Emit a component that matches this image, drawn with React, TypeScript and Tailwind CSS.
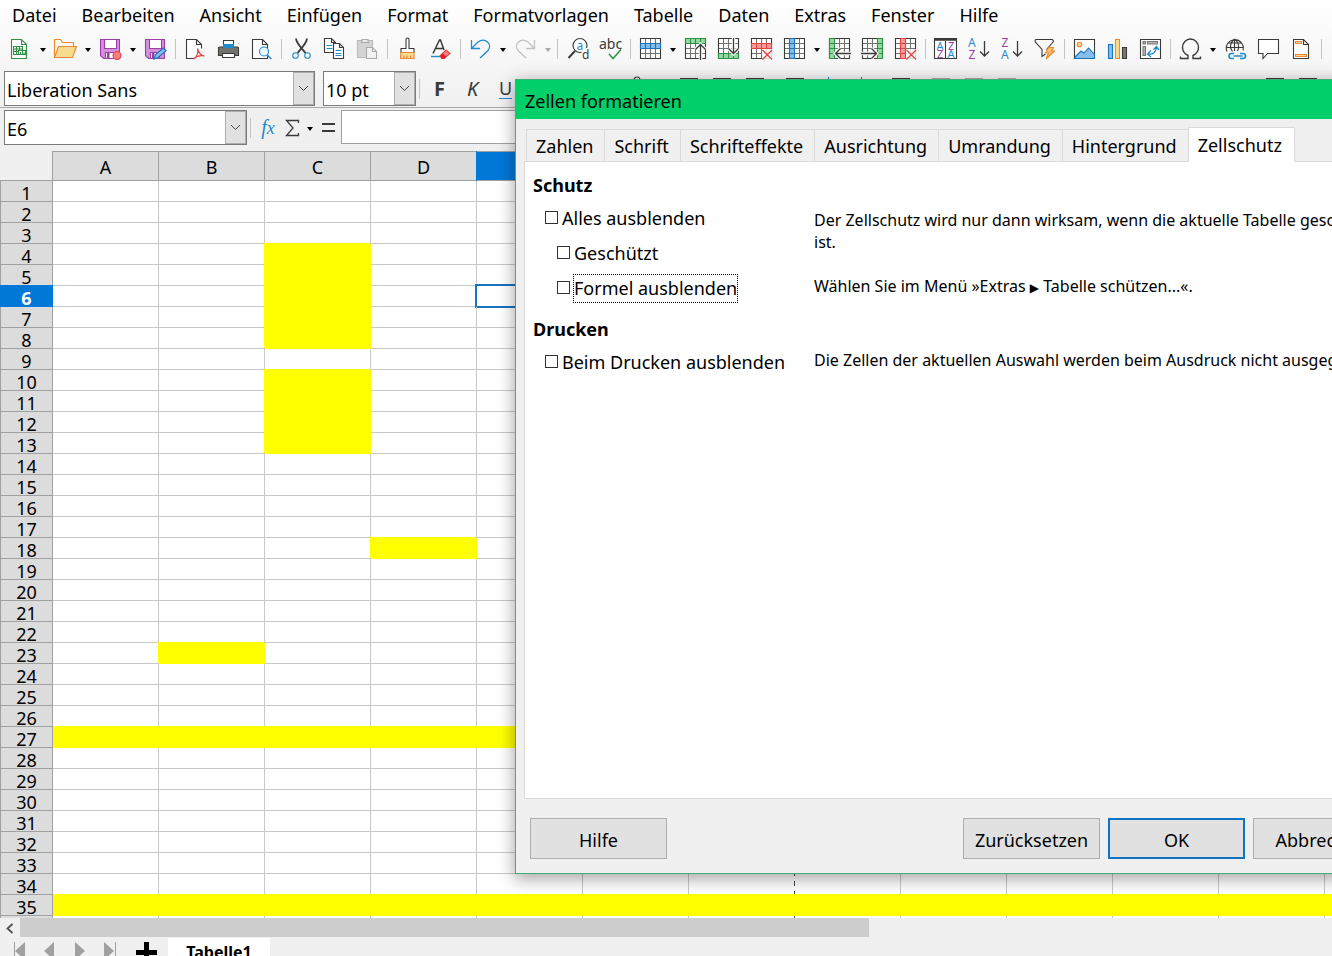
import { useState } from "react";
import type { ReactNode } from "react";

const DARK = "#3a3a38";
const BLUE = "#1e8bcd";
const GREEN = "#309048";
const ORANGE = "#ed8733";
const RED = "#e0433f";
const PURPLE = "#9b3fa5";

const menuItems = ["Datei", "Bearbeiten", "Ansicht", "Einfügen", "Format", "Formatvorlagen", "Tabelle", "Daten", "Extras", "Fenster", "Hilfe"];
const columns = ["A", "B", "C", "D", "E", "F", "G", "H", "I", "J", "K", "L", "M"];
const rows = Array.from({ length: 36 }, (_, i) => i + 1);
const dialogTabs = ["Zahlen", "Schrift", "Schrifteffekte", "Ausrichtung", "Umrandung", "Hintergrund", "Zellschutz"];

const isYellow = (col: string, row: number) => {
  if (row === 27 || row === 35) return true;
  if (col === "C") return (row >= 4 && row <= 8) || (row >= 10 && row <= 13);
  return (col === "D" && row === 18) || (col === "B" && row === 23);
};

const cellClass = (col: string, row: number) => {
  if (!isYellow(col, row)) return "border-[#c8c8c8]";
  return col === "A"
    ? "border-[#ffff00] bg-[#ffff00] shadow-[0_-1px_0_0_#ffff00]"
    : "border-[#ffff00] bg-[#ffff00] shadow-[-1px_-1px_0_0_#ffff00]";
};

function Icon({ children }: { children: ReactNode }) {
  return (
    <svg width="23" height="23" viewBox="0 0 23 23" fill="none" stroke={DARK} strokeWidth="1.1" className="overflow-visible" aria-hidden="true">
      {children}
    </svg>
  );
}

function Tool({ label, children }: { label: string; children: ReactNode }) {
  return (
    <button type="button" aria-label={label} className="flex h-full w-[33px] shrink-0 items-center justify-center">
      {children}
    </button>
  );
}

function More({ muted = false }: { muted?: boolean }) {
  return (
    <button type="button" aria-label="Mehr" className="flex h-full w-3 shrink-0 items-center justify-center">
      <svg width="8" height="8" viewBox="0 0 8 8" fill={muted ? "#a8a8a8" : "#000"} aria-hidden="true">
        <path d="M1 3h6L4 7z" />
      </svg>
    </button>
  );
}

function Sep() {
  return (
    <span className="flex w-[7px] shrink-0 justify-center">
      <span className="h-5 w-px bg-[#c4c4c4]" />
    </span>
  );
}

function Floppy() {
  return (
    <>
      <path d="M1.500 1.500h19v19h-16l-3-3z" fill="#d391dc" stroke={PURPLE} />
      <path d="M5.500 1.500h12v9h-12z" fill="#fff" stroke={PURPLE} />
      <path d="M6.500 14.500h9v6h-9z" fill="#fff" stroke={PURPLE} />
      <path d="M8 15h2.500v5H8z" fill={PURPLE} stroke="none" />
    </>
  );
}

type GridIconProps = { band?: "row" | "col" | "top" | "bottom" | "left" | "right"; fill: string; line: string; children?: ReactNode };

// 4x4 table with one highlighted strip, shared by the row and column commands
function GridIcon({ band, fill, line, children }: GridIconProps) {
  return (
    <Icon>
      <path d="M1.500.5h20v20h-20z" fill="#fff" />
      <path d="M6.500 1v19M11.500 1v19M16.500 1v19M2 5.500h19M2 10.500h19M2 15.500h19" stroke="#72726f" />
      {band === "row" && <path d="M1.500 5.500h20v5h-20zM6.500 5.500v5M11.500 5.500v5M16.500 5.500v5" fill={fill} stroke={line} />}
      {band === "col" && <path d="M6.500.5h5v20h-5zM6.500 5.500h5M6.500 10.500h5M6.500 15.500h5" fill={fill} stroke={line} />}
      {band === "top" && <path d="M1.500.5h20v5h-20zM6.500.5v5M11.500.5v5M16.500.5v5" fill={fill} stroke={line} />}
      {band === "bottom" && <path d="M1.500 15.500h20v5h-20zM6.500 15.500v5M11.500 15.500v5M16.500 15.500v5" fill={fill} stroke={line} />}
      {band === "left" && <path d="M1.500.5h5v20h-5zM1.500 5.500h5M1.500 10.500h5M1.500 15.500h5" fill={fill} stroke={line} />}
      {band === "right" && <path d="M16.500.5h5v20h-5zM16.500 5.500h5M16.500 10.500h5M16.500 15.500h5" fill={fill} stroke={line} />}
      {children}
    </Icon>
  );
}

function Arrow({ d }: { d: string }) {
  return (
    <>
      <path d={d} stroke="#fff" strokeWidth="3.500" />
      <path d={d} stroke={DARK} strokeWidth="1.300" />
    </>
  );
}

function Cross() {
  return (
    <>
      <path d="M12 11h10.500v10.500H12z" fill="#fff" fillOpacity=".8" stroke="none" />
      <path d="M12.500 12l9.500 9.500M22 12l-9.500 9.500" stroke={RED} strokeWidth="1.300" />
    </>
  );
}

function Letter({ x, y, size = 11, fill, children }: { x: number; y: number; size?: number; fill: string; children: string }) {
  return (
    <text x={x} y={y} fontSize={size} fill={fill} stroke="none" fontFamily="Noto Sans, sans-serif">
      {children}
    </text>
  );
}

function StandardBar() {
  return (
    <div className="flex h-9 items-center pl-1" role="toolbar" aria-label="Standard">
      <Tool label="Neu">
        <Icon>
          <path d="M2.500 1.500h10l5 5v14h-15zM12.500 1.500v5h5" fill="#fff" stroke={GREEN} />
          <path d="M4.500 8.500h9v8h-9zM4.500 11h9M4.500 13.500h9M7.500 8.500v8M10.500 8.500v8" stroke={GREEN} />
          <path d="M9.500 12.500h7v4h-7z" fill="#fff" stroke={GREEN} />
          <path d="M11.500 14v2M13.500 13v3M15 14.500v1.500" stroke={GREEN} />
        </Icon>
      </Tool>
      <More />
      <Tool label="Öffnen">
        <Icon>
          <path d="M.5 19V1.500h6l2 3h11v4" fill="#fff7ea" stroke={ORANGE} />
          <path d="M.5 19.500L4.500 8.500h18l-4 11z" fill="#f8db8f" stroke={ORANGE} />
        </Icon>
      </Tool>
      <More />
      <Tool label="Speichern">
        <Icon>
          <Floppy />
          <circle cx="18" cy="17.500" r="4" fill="#f58080" stroke={RED} />
        </Icon>
      </Tool>
      <More />
      <Tool label="Speichern unter">
        <Icon>
          <Floppy />
          <path d="M10 21l1.500-4.500 8-6.500 2.500 2.800-8 6.700z" fill="#83beec" stroke="#1a6fb5" />
        </Icon>
      </Tool>
      <Sep />
      <Tool label="Als PDF exportieren">
        <Icon>
          <path d="M10 20.500H2.500v-19h10l5 5v4M12.500 1.500v5h5" fill="#fdfdfd" />
          <path d="M13.500 10.500c1 4 3 7 7 7.500-4-1-8 0-11 3 3-1 5-6 4-10.500z" stroke={RED} />
        </Icon>
      </Tool>
      <Tool label="Drucken">
        <Icon>
          <path d="M6.500 8V2.500h10V8" fill="#fff" />
          <path d="M2.500 9h18a1 1 0 011 1v7.500h-20V10a1 1 0 011-1z" fill="#72726f" stroke={DARK} />
          <path d="M6 6h11v4H6z" fill={BLUE} stroke="none" />
          <path d="M5.500 15.500h12v4h-12z" fill="#fff" />
        </Icon>
      </Tool>
      <Tool label="Druckvorschau">
        <Icon>
          <path d="M2.500 1.500h10l5 5v14h-15zM12.500 1.500v5h5" fill="#fdfdfd" />
          <circle cx="14" cy="13.500" r="4.500" fill="#eaf5fd" stroke={BLUE} />
          <path d="M17.300 17l4 4" stroke={BLUE} strokeWidth="1.500" />
        </Icon>
      </Tool>
      <Sep />
      <Tool label="Ausschneiden">
        <Icon>
          <path d="M6 .5c0 4 4 8 9.500 14.500M17 .5c0 4-4 8-9.500 14.500" strokeWidth="1.800" />
          <circle cx="5.500" cy="17.500" r="2.800" stroke={BLUE} />
          <circle cx="17.500" cy="17.500" r="2.800" stroke={BLUE} />
        </Icon>
      </Tool>
      <Tool label="Kopieren">
        <Icon>
          <path d="M1.500.5h7l4 4v10h-11zM8.500.5v4h4" fill="#fff" />
          <path d="M3.500 7.500h6M3.500 10.500h6" stroke={BLUE} />
          <path d="M10.500 5.500h6l4 4v11h-10zM16.500 5.500v4h4" fill="#fff" />
          <path d="M12.500 12.500h6M12.500 15.500h6M12.500 17.500h6" stroke={BLUE} />
        </Icon>
      </Tool>
      <Tool label="Einfügen">
        <Icon>
          <path d="M1.500 2.500h15v17h-15z" fill="#d4d4d4" stroke="#bbb" />
          <path d="M6 1.500h6v3H6zM4.500 4.500h9" fill="#eee" stroke="#aaa" />
          <path d="M10.500 9.500h6l4 4v7h-10zM16.500 9.500v4h4" fill="#f2f2f2" stroke="#aaa" />
        </Icon>
      </Tool>
      <Sep />
      <Tool label="Format übertragen">
        <Icon>
          <path d="M10 10.500v-9a1.500 1.500 0 013 0v9h5v4H5v-4z" fill="#fff" />
          <path d="M5 14.500h13v6H4.500z" fill="#f8db8f" stroke={ORANGE} />
          <path d="M8 17.500v3M11 17.500v3M14.500 17.500v3" stroke={ORANGE} />
        </Icon>
      </Tool>
      <Tool label="Direkte Formatierung löschen">
        <Icon>
          <path d="M4 15.500L10.500 2h1l3.500 10M6.500 10.500h7.500" strokeWidth="1.500" />
          <path d="M2 18.500h9" stroke={BLUE} strokeWidth="1.400" />
          <path d="M11 18l6-6 4 3.500-6 5h-2z" fill="#f58080" stroke={RED} />
          <path d="M11 18l2.500-2.500 4 3-2.500 2.500h-2z" fill="#d6252a" stroke="none" />
        </Icon>
      </Tool>
      <Sep />
      <Tool label="Rückgängig">
        <Icon>
          <path d="M2.500 2v8.500H11M3 10L9 4c7-5 15 2 10 8.500L11 20" stroke={BLUE} strokeWidth="1.300" />
        </Icon>
      </Tool>
      <More />
      <Tool label="Wiederherstellen">
        <Icon>
          <path d="M20.500 2v8.500H12M20 10l-6-6C7-1-1 6 4 12.500L12 20" stroke="#c2c2c2" strokeWidth="1.300" />
        </Icon>
      </Tool>
      <More muted />
      <Sep />
      <Tool label="Suchen und Ersetzen">
        <Icon>
          <circle cx="14" cy="7.500" r="7" fill="#fff" />
          <path d="M9 13l-6.500 7" strokeWidth="2" />
          <path d="M15.500 10h8v11h-8z" fill="#fafafa" stroke="none" />
          <Letter x={10.500} y={11.500} size={12} fill={BLUE}>a</Letter>
          <Letter x={16} y={20.500} size={12} fill={DARK}>d</Letter>
        </Icon>
      </Tool>
      <Tool label="Rechtschreibung">
        <Icon>
          <Letter x={0} y={10.500} size={14} fill={DARK}>abc</Letter>
          <path d="M10 16l4 4.500L22 11.500" stroke={GREEN} strokeWidth="1.500" />
        </Icon>
      </Tool>
      <Sep />
      <Tool label="Zeile"><GridIcon band="row" fill="#83beec" line="#1e73b8" /></Tool>
      <More />
      <Tool label="Zeile oberhalb einfügen">
        <GridIcon band="top" fill="#92d9a4" line={GREEN}><Arrow d="M16.500 22V6.500M11.500 11.500l5-5 5 5" /></GridIcon>
      </Tool>
      <Tool label="Zeile unterhalb einfügen">
        <GridIcon band="bottom" fill="#92d9a4" line={GREEN}><Arrow d="M16.500 0v15.500M11.500 10.500l5 5 5-5" /></GridIcon>
      </Tool>
      <Tool label="Zeilen löschen"><GridIcon band="row" fill="#fa9a98" line={RED}><Cross /></GridIcon></Tool>
      <Tool label="Spalte"><GridIcon band="col" fill="#83beec" line="#1e73b8" /></Tool>
      <More />
      <Tool label="Spalte davor einfügen">
        <GridIcon band="left" fill="#92d9a4" line={GREEN}><Arrow d="M23 15.500H7.500M12.500 10.500l-5 5 5 5" /></GridIcon>
      </Tool>
      <Tool label="Spalte danach einfügen">
        <GridIcon band="right" fill="#92d9a4" line={GREEN}><Arrow d="M0 15.500h15.500M10.500 10.500l5 5-5 5" /></GridIcon>
      </Tool>
      <Tool label="Spalten löschen"><GridIcon band="col" fill="#fa9a98" line={RED}><Cross /></GridIcon></Tool>
      <Sep />
      <Tool label="Sortieren">
        <Icon>
          <path d="M.5.5h22v20H.5z" fill="#fff" />
          <path d="M.5 1.500h22" strokeWidth="2.500" />
          <path d="M11.500 3v17.500" />
          <Letter x={2.500} y={11.500} size={11} fill={BLUE}>A</Letter>
          <Letter x={3} y={20} size={11} fill={PURPLE}>Z</Letter>
          <Letter x={14} y={11.500} size={11} fill={PURPLE}>Z</Letter>
          <Letter x={13.500} y={20} size={11} fill={BLUE}>A</Letter>
        </Icon>
      </Tool>
      <Tool label="Aufsteigend sortieren">
        <Icon>
          <Letter x={1} y={9} size={12} fill={BLUE}>A</Letter>
          <Letter x={1.500} y={20.500} size={12} fill={PURPLE}>Z</Letter>
          <path d="M17.500 3v14.500M13 13.500l4.500 4.500 4.500-4.500" strokeWidth="1.300" />
        </Icon>
      </Tool>
      <Tool label="Absteigend sortieren">
        <Icon>
          <Letter x={1.500} y={9} size={12} fill={PURPLE}>Z</Letter>
          <Letter x={1} y={20.500} size={12} fill={BLUE}>A</Letter>
          <path d="M17.500 3v14.500M13 13.500l4.500 4.500 4.500-4.500" strokeWidth="1.300" />
        </Icon>
      </Tool>
      <Tool label="AutoFilter">
        <Icon>
          <path d="M2.500 1.500h17l1 2-7 8M2.500 1.500l-.5 2 7 8v7l3.500-2.500" />
          <path d="M15.500 9.500h5l-2 3.500h3l-8.500 8 2.500-6h-3z" fill="#f8c06a" stroke={ORANGE} />
        </Icon>
      </Tool>
      <Sep />
      <Tool label="Bild einfügen">
        <Icon>
          <path d="M1.500 1.500h20v19h-20z" fill="#fff" />
          <path d="M2 19l6-6 3 2 4.500-5 6 6.500v4H2z" fill="#83beec" stroke="#1e73b8" />
          <circle cx="6.500" cy="6.500" r="2.300" fill="#f8db8f" stroke={ORANGE} />
        </Icon>
      </Tool>
      <Tool label="Diagramm einfügen">
        <Icon>
          <path d="M2.500 6.500h4v14h-4z" fill="#83beec" stroke="#1e73b8" />
          <path d="M9.500 1.500h4v19h-4z" fill="#f8db8f" stroke={ORANGE} />
          <path d="M16.500 9.500h4v11h-4z" fill="#797774" />
        </Icon>
      </Tool>
      <Tool label="Pivot-Tabelle">
        <Icon>
          <path d="M1.500 1.500h20v19h-20z" fill="#fff" />
          <path d="M4 3.500h2.500V6H4zM8.500 3.500h10V6h-10zM4 8.500h2.500v9H4z" fill="#b4b4b2" stroke="#797774" />
          <path d="M9 16c5 1 8-2 8.500-7M12 12.500L8.500 16l3.500 3M14.500 11.500L17.500 8.500l2.500 3.500" stroke={BLUE} strokeWidth="1.300" />
        </Icon>
      </Tool>
      <Sep />
      <Tool label="Sonderzeichen">
        <Icon>
          <path d="M1.500 18.500v2H9v-3c-3-1.500-5.500-4-5.500-8a8 8.500 0 0116 0c0 4-2.500 6.500-5.500 8v3h7.500v-2" strokeWidth="1.400" />
        </Icon>
      </Tool>
      <More />
      <Tool label="Hyperlink">
        <Icon>
          <path d="M3 13.500a8.500 8.500 0 1116-1M10.500 1c-5 4-5 9-2 12.500M10.500 1c5 4 5 8 3 12M10.500 1v12M2 9.500h17M4 5h13" />
          <path d="M10 15.500H7.500a2.500 2.500 0 000 5H10M16 15.500h3a2.500 2.500 0 010 5h-3M9.500 18h9" stroke={BLUE} strokeWidth="1.600" />
        </Icon>
      </Tool>
      <Tool label="Kommentar">
        <Icon>
          <path d="M1.500 1.500h20v14h-11l-4.500 5v-5H1.500z" fill="#fff" />
        </Icon>
      </Tool>
      <Tool label="Kopf- und Fußzeilen">
        <Icon>
          <path d="M3.500 1.500h10l5 5v14h-15zM13.500 1.500v5h5" fill="#fff" />
          <path d="M5.500 3.500h6v2h-6zM5.500 16.500h11v2h-11z" fill="#f8db8f" stroke={ORANGE} />
        </Icon>
      </Tool>
      <Sep />
    </div>
  );
}

function Combo({ label, value, className }: { label: string; value: string; className: string }) {
  return (
    <div className={`flex h-[35px] shrink-0 border border-[#7a7a7a] bg-white ${className}`}>
      <input aria-label={label} defaultValue={value} className="min-w-0 flex-1 bg-transparent px-[2px] pt-[2px] outline-none" />
      <button type="button" aria-label={`${label} öffnen`} className="flex w-[21px] items-center justify-center border border-[#adadad] bg-[#e1e1e1]">
        <svg width="11" height="7" viewBox="0 0 11 7" fill="none" stroke="#444" aria-hidden="true">
          <path d="M1 1l4.500 4.500L10 1" />
        </svg>
      </button>
    </div>
  );
}

function Lines({ muted = false }: { muted?: boolean }) {
  return (
    <Icon>
      <path d="M2 1.500h18M2 6.500h12M2 11.500h18M2 16.500h12" stroke={muted ? "#a9a9a9" : DARK} />
    </Icon>
  );
}

function FormatBar() {
  return (
    <div className="flex h-10 items-center overflow-hidden pl-1 pt-[3px] text-lg" role="toolbar" aria-label="Format">
      <Combo label="Schriftname" value="Liberation Sans" className="w-[311px]" />
      <Combo label="Schriftgröße" value="10 pt" className="ml-2 w-[93px]" />
      <Sep />
      <Tool label="Fett"><span className="text-xl font-bold leading-6 text-[#3a3a38]">F</span></Tool>
      <Tool label="Kursiv"><span className="text-xl italic leading-6 text-[#3a3a38]">K</span></Tool>
      <Tool label="Unterstrichen"><span className="border-b border-[#1e8bcd] text-lg leading-5 text-[#3a3a38]">U</span></Tool>
      <Tool label="Durchgestrichen"><Icon><path d="M4 12.500h15" /></Icon></Tool>
      <Tool label="Hochgestellt"><Icon><path d="M4 8l8 9M12 8l-8 9" /></Icon></Tool>
      <Tool label="Schriftfarbe"><Icon><path d="M5 20.500h13" stroke={RED} /></Icon></Tool>
      <Tool label="Hintergrundfarbe"><Icon><path d="M8 3a3 3 0 016 0v6" /></Icon></Tool>
      <More />
      <Sep />
      <Tool label="Linksbündig"><Lines /></Tool>
      <Tool label="Zentriert"><Lines /></Tool>
      <Tool label="Rechtsbündig"><Lines /></Tool>
      <Sep />
      <Tool label="Textumbruch"><Lines /></Tool>
      <Tool label="Zellen verbinden"><Icon><path d="M11.500 0v20" stroke={BLUE} /></Icon></Tool>
      <Tool label="Zellen trennen"><Icon><path d="M11.500 0v20" stroke={BLUE} /></Icon></Tool>
      <Sep />
      <Tool label="Oben ausrichten"><Lines /></Tool>
      <Sep />
      <Tool label="Einzug"><Lines muted /></Tool>
      <Tool label="Mitte"><Lines muted /></Tool>
      <Tool label="Unten"><Lines muted /></Tool>
      <span className="w-[235px] shrink-0" />
      <Tool label="Rahmen"><Lines /></Tool>
      <Tool label="Rahmenstil"><Lines /></Tool>
    </div>
  );
}

function FormulaBar() {
  return (
    <div className="flex h-[43px] items-start bg-[#f0f0f0] pl-1 pt-[2px] text-lg">
      <Combo label="Namenfeld" value="E6" className="w-[243px]" />
      <div className="flex h-[35px] w-[94px] shrink-0 items-center">
        <Sep />
        <button type="button" aria-label="Funktions-Assistent" className="w-7 text-xl italic leading-6 text-[#1e8bcd]">
          <span className="font-['Liberation_Serif',serif]">f<span className="text-lg">x</span></span>
        </button>
        <button type="button" aria-label="Summe" className="flex w-5 justify-center">
          <svg width="15" height="18" viewBox="0 0 15 18" fill="none" stroke={DARK} strokeWidth="1.300" aria-hidden="true">
            <path d="M13.500 4V1.500H1.500L8 9l-6.500 7.500h12V14" />
          </svg>
        </button>
        <span className="ml-[2px] flex h-full"><More /></span>
        <button type="button" aria-label="Formel" className="flex flex-1 justify-center">
          <svg width="13" height="9" viewBox="0 0 13 9" fill={DARK} aria-hidden="true">
            <path d="M0 0h13v2H0zM0 7h13v2H0z" />
          </svg>
        </button>
      </div>
      <input aria-label="Eingabezeile" className="h-[34px] min-w-0 flex-1 border border-[#a0a0a0] bg-white px-1 outline-none" />
    </div>
  );
}

function Sheet() {
  return (
    <div className="min-h-0 flex-1 overflow-hidden bg-white">
      <table className="w-[1431px] table-fixed border-separate border-spacing-0 text-lg">
        <thead>
          <tr>
            <th className="w-[53px] border-b border-r border-[#a0a0a0] bg-[#f0f0f0] p-0" aria-label="Alles auswählen" />
            {columns.map((col) => (
              <th
                key={col}
                scope="col"
                className={`w-[106px] border-b border-r border-t border-[#a0a0a0] p-0 font-normal ${
                  col === "E" ? "bg-[#0078d7] text-white shadow-[-1px_0_0_0_#0078d7]" : "bg-[#dcdcdc]"
                }`}
              >
                <span className="block h-7 leading-[30px]">{col}</span>
              </th>
            ))}
          </tr>
        </thead>
        <tbody>
          {rows.map((row) => (
            <tr key={row}>
              <th
                scope="row"
                className={`border-b border-l border-r p-0 ${
                  row === 6 ? "border-[#0078d7] bg-[#0078d7] font-bold text-white shadow-[0_-1px_0_0_#0078d7]" : "border-[#a0a0a0] bg-[#dcdcdc] font-normal"
                }`}
              >
                <span className="block h-5 leading-6">{row}</span>
              </th>
              {columns.map((col) => (
                <td key={col} className={`relative border-b border-r p-0 ${cellClass(col, row)}`}>
                  {col === "E" && row === 6 && <span className="absolute -bottom-[2px] -left-[2px] -right-[2px] -top-[2px] border-2 border-[#1a73bd]" />}
                  {/* page break after column G */}
                  {col === "G" && !isYellow(col, row) && (
                    <span className="absolute -right-px top-0 h-full w-px bg-[repeating-linear-gradient(to_bottom,#444_0_2px,#fff_2px_7px,#444_7px_10px)]" />
                  )}
                </td>
              ))}
            </tr>
          ))}
        </tbody>
      </table>
    </div>
  );
}

function SheetNav({ label, d }: { label: string; d: string }) {
  return (
    <button type="button" aria-label={label} className="flex w-[30px] justify-center">
      <svg width="12" height="18" viewBox="0 0 12 18" fill="#a0a0a0" aria-hidden="true">
        <path d={d} />
      </svg>
    </button>
  );
}

function BottomBar() {
  return (
    <>
      <div className="flex h-5 shrink-0 bg-[#f0f0f0]">
        <button type="button" aria-label="Nach links" className="flex w-5 items-center justify-center">
          <svg width="8" height="11" viewBox="0 0 8 11" fill="none" stroke="#505050" strokeWidth="1.800" aria-hidden="true">
            <path d="M6.500 1l-5 4.500 5 4.500" />
          </svg>
        </button>
        <span className="mb-px flex-[11] bg-[#cdcdcd]" />
        <span className="flex-[6]" />
      </div>
      <div className="flex h-[18px] shrink-0 items-start overflow-hidden bg-[#f0f0f0] pl-[5px]">
        <SheetNav label="Erste Tabelle" d="M0 4h1v18H0zM11 4v18L1 13z" />
        <SheetNav label="Vorherige Tabelle" d="M10 4v18L0 13z" />
        <SheetNav label="Nächste Tabelle" d="M1 4v18l10-9z" />
        <SheetNav label="Letzte Tabelle" d="M0 4v18l10-9zM11 4h1v18h-1z" />
        <button type="button" aria-label="Tabelle hinzufügen" className="flex w-[43px] justify-center">
          <svg width="21" height="25" viewBox="0 0 21 25" aria-hidden="true">
            <path d="M8 4h5v8h8v5h-8v8H8v-8H0v-5h8z" />
          </svg>
        </button>
        <button type="button" className="h-7 w-[102px] bg-white text-base font-bold leading-7">Tabelle1</button>
      </div>
    </>
  );
}

function CheckRow({ id, label, indent = false, focused = false }: { id: string; label: string; indent?: boolean; focused?: boolean }) {
  return (
    <div className={`flex h-[35px] items-center ${indent ? "pl-6" : "pl-3"}`}>
      <input id={id} type="checkbox" className="mb-[2px] h-[13px] w-[13px] shrink-0 appearance-none border border-[#333] bg-white checked:bg-[#0078d7]" />
      <label htmlFor={id} className={`ml-[3px] whitespace-nowrap border border-dotted leading-[27px] ${focused ? "border-black" : "border-transparent"}`}>
        {label}
      </label>
    </div>
  );
}

function DialogButton({ children, primary = false }: { children: string; primary?: boolean }) {
  return (
    <button
      type="button"
      className={`h-[41px] w-[137px] bg-[#e1e1e1] pt-[2px] ${primary ? "border-2 border-[#0f74c4]" : "border border-[#adadad]"}`}
    >
      {children}
    </button>
  );
}

function FormatDialog() {
  const [active, setActive] = useState("Zellschutz");

  return (
    <div
      role="dialog"
      aria-labelledby="dialog-title"
      className="absolute left-[515px] top-[79px] flex w-[884px] flex-col border border-[#3fae7c] bg-[#f0f0f0] text-lg shadow-[0_4px_16px_1px_rgba(0,0,0,0.35)]"
    >
      <h1 id="dialog-title" className="h-[39px] bg-[#00cf6a] pl-[9px] pt-[2px] leading-[39px]">Zellen formatieren</h1>
      <div className="px-2 pt-2">
        <div role="tablist" className="relative z-10 -mb-px flex h-[35px] items-end pl-[2px]">
          {dialogTabs.map((tab) => (
            <button
              key={tab}
              type="button"
              role="tab"
              aria-selected={active === tab}
              onClick={() => setActive(tab)}
              className={
                active === tab
                  ? "h-[35px] border border-b-0 border-[#dadada] bg-white pl-[9px] pr-3"
                  : "h-[33px] border border-r-0 border-[#dadada] pl-[9px] pr-[11px] pt-px"
              }
            >
              {tab}
            </button>
          ))}
        </div>
        <div role="tabpanel" className="h-[638px] border border-[#dadada] bg-white pl-2 pt-[11px]">
          <section className="grid grid-cols-[281px_1fr]">
            <h2 className="col-span-2 mb-1 h-6 font-bold leading-6">Schutz</h2>
            <div>
              <CheckRow id="hide-all" label="Alles ausblenden" />
              <CheckRow id="protected" label="Geschützt" indent />
              <CheckRow id="hide-formula" label="Formel ausblenden" indent focused />
            </div>
            <div className="pt-2 text-base leading-[22px]">
              <p>Der Zellschutz wird nur dann wirksam, wenn die aktuelle Tabelle geschützt ist.</p>
              <p className="mt-[22px]">
                Wählen Sie im Menü »Extras <span className="font-['DejaVu_Sans',sans-serif] text-xs leading-4">▶</span> Tabelle schützen...«.
              </p>
            </div>
          </section>
          <section className="mt-[11px] grid grid-cols-[281px_1fr]">
            <h2 className="col-span-2 mb-1 h-6 font-bold leading-6">Drucken</h2>
            <CheckRow id="hide-print" label="Beim Drucken ausblenden" />
            <p className="pt-1 text-base leading-[22px]">Die Zellen der aktuellen Auswahl werden beim Ausdruck nicht ausgegeben.</p>
          </section>
        </div>
      </div>
      <div className="flex gap-2 pb-[14px] pl-[14px] pr-2 pt-[19px]">
        <DialogButton>Hilfe</DialogButton>
        <span className="flex-1" />
        <DialogButton>Zurücksetzen</DialogButton>
        <DialogButton primary>OK</DialogButton>
        <DialogButton>Abbrechen</DialogButton>
      </div>
    </div>
  );
}

export default function App() {
  return (
    <div className="relative flex h-screen flex-col overflow-hidden bg-[#f0f0f0] font-['Noto_Sans',sans-serif] text-black">
      <div className="border-b border-[#a8a8a8] bg-linear-to-b from-white to-[#f0f0f0]">
        <nav className="flex h-[31px] items-center gap-[25px] pl-3 text-lg leading-[31px]">
          {menuItems.map((item) => (
            <button key={item} type="button">{item}</button>
          ))}
        </nav>
        <StandardBar />
        <FormatBar />
      </div>
      <FormulaBar />
      <Sheet />
      <BottomBar />
      <FormatDialog />
    </div>
  );
}
